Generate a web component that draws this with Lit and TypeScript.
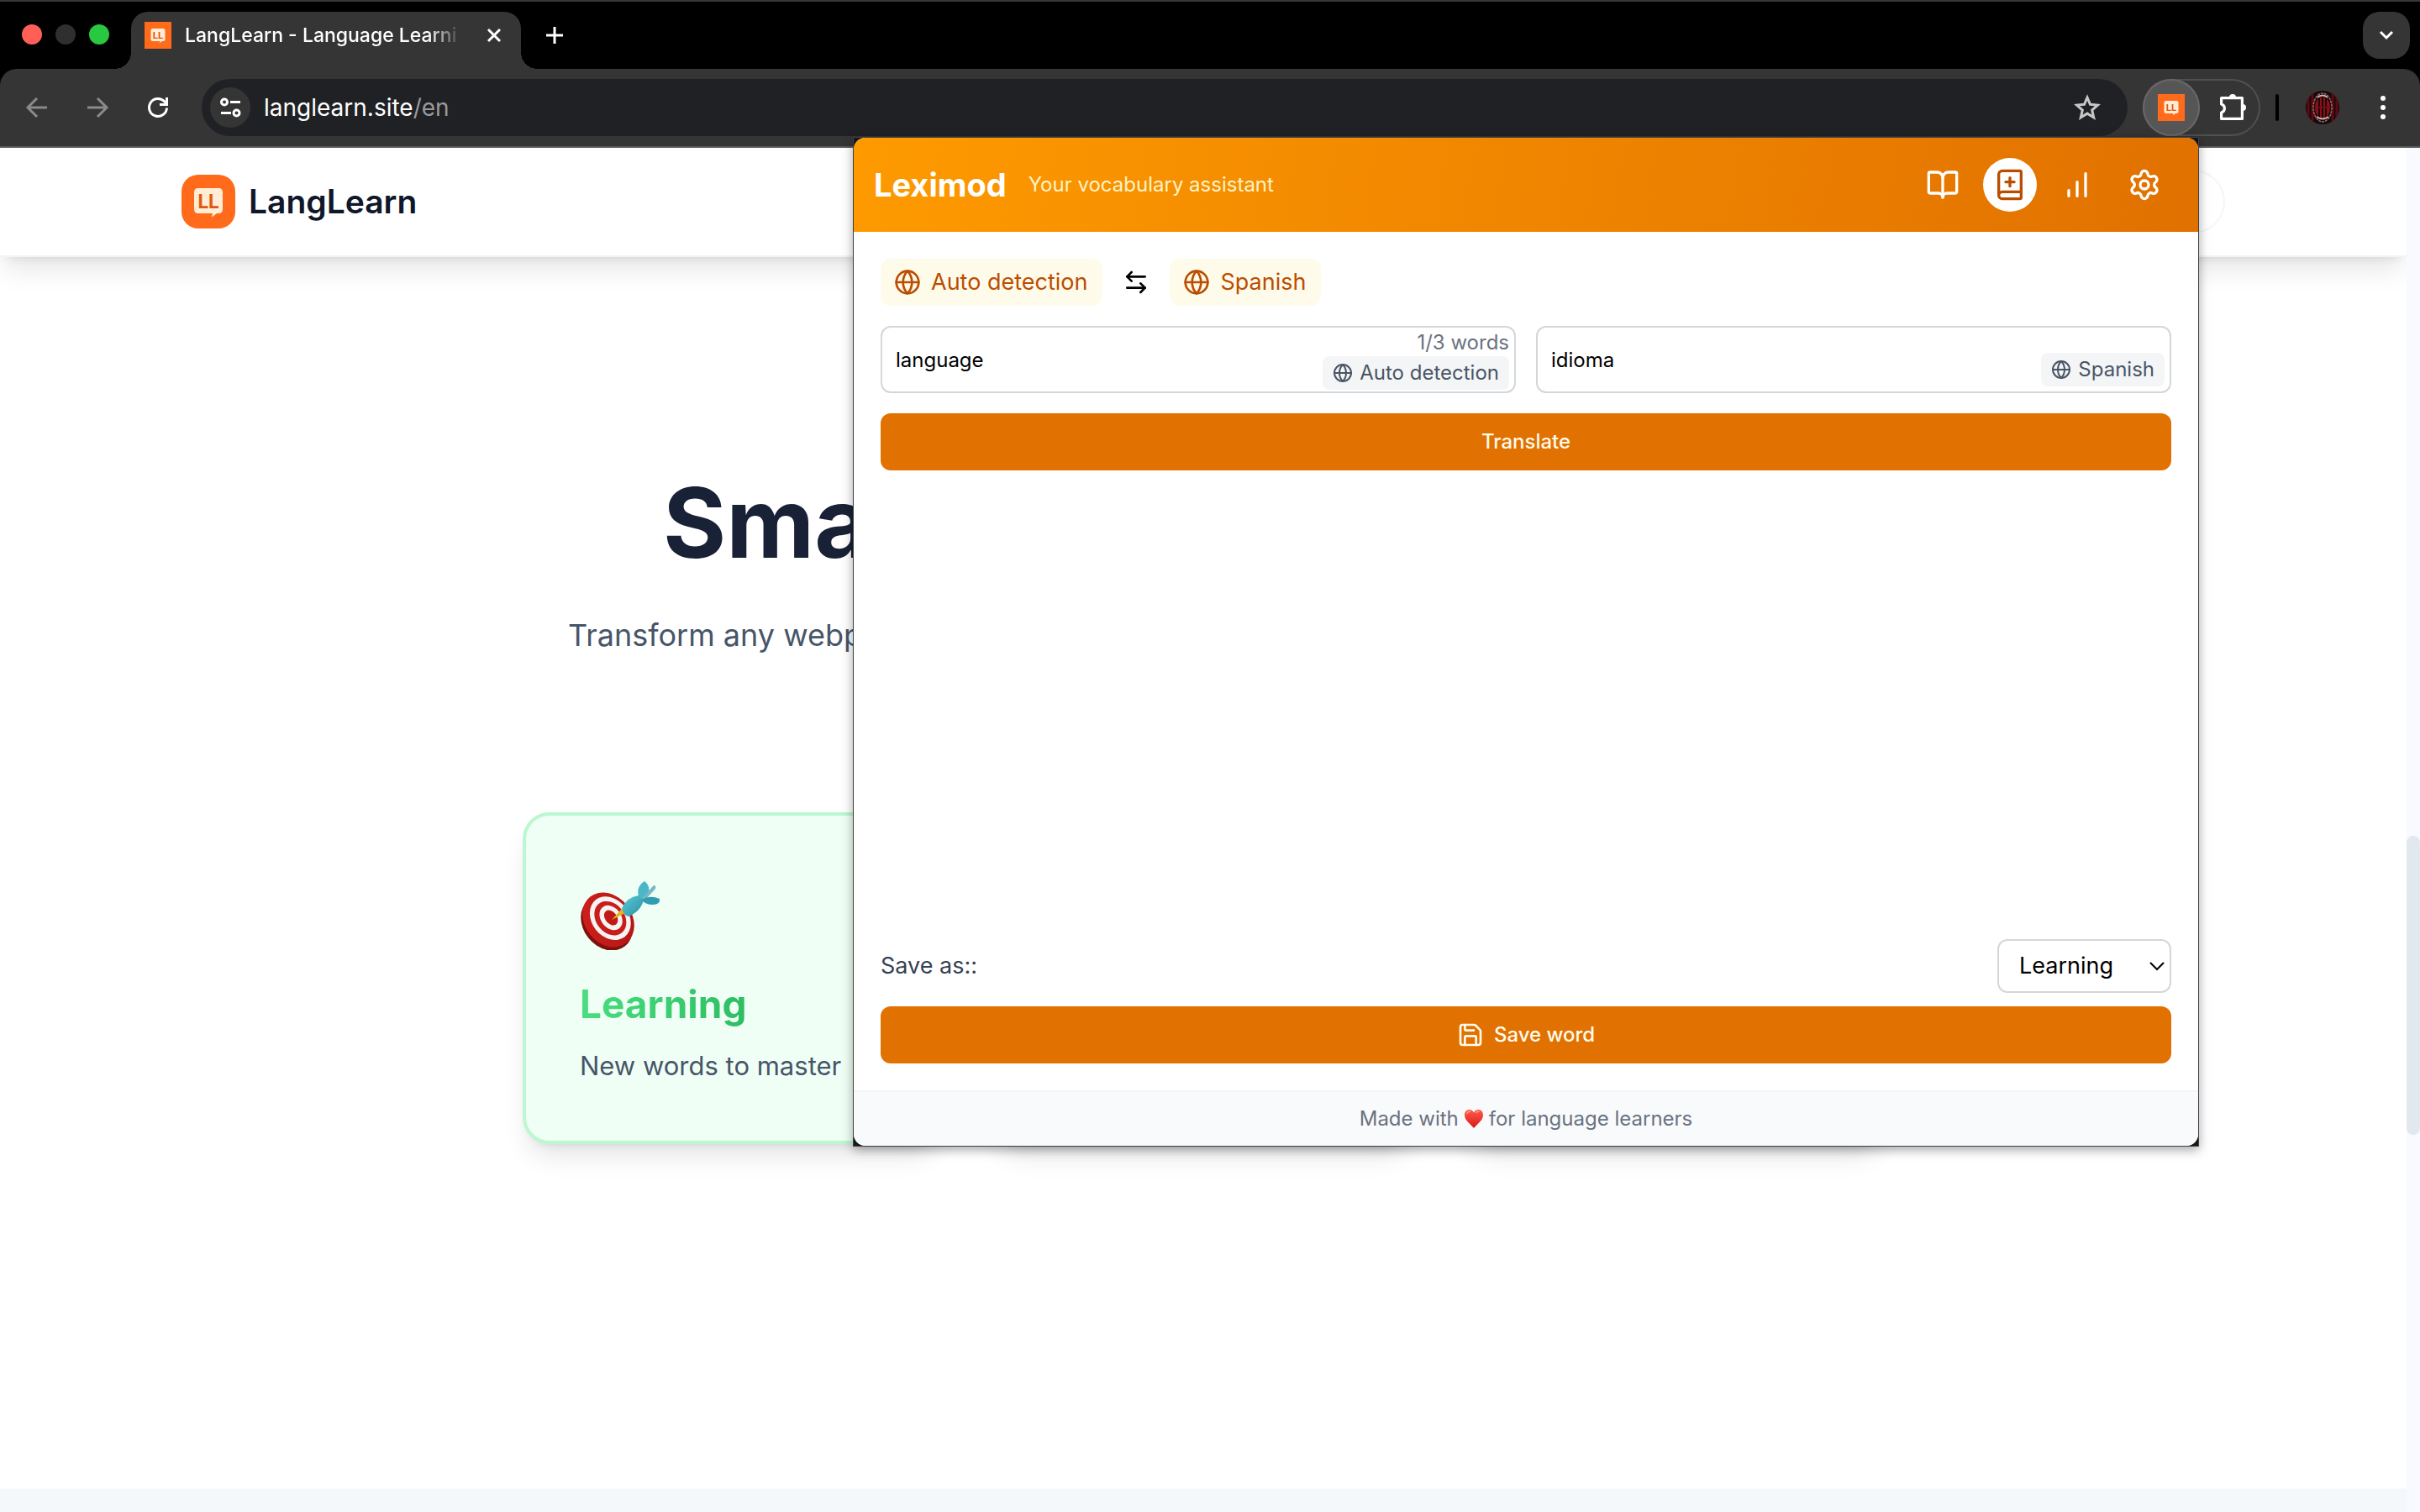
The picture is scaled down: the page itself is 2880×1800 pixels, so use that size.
import { LitElement, html, svg, css } from "lit";
import { customElement, property } from "lit/decorators.js";

const lucide = {
  globe: svg`<circle cx="12" cy="12" r="10"/><path d="M12 2a14.5 14.5 0 0 0 0 20 14.5 14.5 0 0 0 0-20"/><path d="M2 12h20"/>`,
  swap: svg`<path d="M8 3 4 7l4 4"/><path d="M4 7h16"/><path d="m16 21 4-4-4-4"/><path d="M20 17H4"/>`,
  book: svg`<path d="M12 7v14"/><path d="M3 18a1 1 0 0 1-1-1V4a1 1 0 0 1 1-1h5a4 4 0 0 1 4 4 4 4 0 0 1 4-4h5a1 1 0 0 1 1 1v13a1 1 0 0 1-1 1h-6a3 3 0 0 0-3 3 3 3 0 0 0-3-3z"/>`,
  bookPlus: svg`<path d="M12 7v6"/><path d="M4 19.5v-15A2.5 2.5 0 0 1 6.500 2H19a1 1 0 0 1 1 1v18a1 1 0 0 1-1 1H6.500a1 1 0 0 1 0-5H20"/><path d="M9 10h6"/>`,
  chart: svg`<path d="M12 20V10"/><path d="M18 20V4"/><path d="M6 20v-4"/>`,
  settings: svg`<path d="M9.671 4.136a2.34 2.34 0 0 1 4.659 0 2.34 2.34 0 0 0 3.319 1.915 2.34 2.34 0 0 1 2.33 4.033 2.34 2.34 0 0 0 0 3.831 2.34 2.34 0 0 1-2.33 4.033 2.34 2.34 0 0 0-3.319 1.915 2.34 2.34 0 0 1-4.659 0 2.34 2.34 0 0 0-3.32-1.915 2.34 2.34 0 0 1-2.33-4.033 2.34 2.34 0 0 0 0-3.831A2.34 2.34 0 0 1 6.35 6.051a2.34 2.34 0 0 0 3.319-1.915"/><circle cx="12" cy="12" r="3"/>`,
  save: svg`<path d="M15.200 3a2 2 0 0 1 1.400.600l3.800 3.800a2 2 0 0 1 .600 1.400V19a2 2 0 0 1-2 2H5a2 2 0 0 1-2-2V5a2 2 0 0 1 2-2z"/><path d="M17 21v-7a1 1 0 0 0-1-1H8a1 1 0 0 0-1 1v7"/><path d="M7 3v4a1 1 0 0 0 1 1h7"/>`,
};

type IconName = keyof typeof lucide;

const icon = (name: IconName, size: number) => html`
  <svg class="icon" width=${size} height=${size} viewBox="0 0 24 24" fill="none" stroke="currentColor"
    stroke-width="2" stroke-linecap="round" stroke-linejoin="round" aria-hidden="true">${lucide[name]}</svg>`;

const base = css`
  *, *::before, *::after { box-sizing: border-box; }
  button, input, select { font: inherit; color: inherit; margin: 0; padding: 0; border: 0; background: none; }
  svg { display: block; flex: none; }
  a { color: inherit; text-decoration: none; }
  h1, h2, p { margin: 0; font-weight: inherit; font-size: inherit; }
`;

@customElement("lang-logo")
export class LangLogo extends LitElement {
  @property({ type: Number }) size = 64;
  @property({ type: Number }) radius = 20;

  static styles = css`
    :host { display: block; flex: none; }
    svg { display: block; }
    text { font-family: "Liberation Sans Narrow", Roboto, "Liberation Sans", sans-serif; font-weight: 700; }
  `;

  render() {
    return html`
      <svg width=${this.size} height=${this.size} viewBox="0 0 64 64" aria-hidden="true">
        <rect width="64" height="64" rx=${this.radius} fill="#ff6b1a" />
        <path d="M20 16h24q5 0 5 5v20q0 5-5 5h-2l-6 4.500 1-4.500H20q-5 0-5-5V21q0-5 5-5z" fill="#ffedd5" />
        <text x="32" y="40" text-anchor="middle" font-size="23" fill="#e2560f">LL</text>
      </svg>`;
  }
}

@customElement("browser-bar")
export class BrowserBar extends LitElement {
  static styles = [base, css`
    :host { display: block; background: #000; color: #fff; border-top: 2px solid #383838; }
    .tabs { display: flex; height: 80px; padding: 12px 12px 0 26px; }
    .lights { display: flex; gap: 16px; margin-top: 15px; }
    .light { width: 24px; height: 24px; border-radius: 50%; }
    .red { background: #ff5f57; }
    .dim { background: #2f2f2f; }
    .green { background: #28c840; }
    .tab {
      position: relative; display: flex; align-items: center; width: 464px; height: 68px; margin-left: 26px;
      padding: 0 20px 12px 16px; border-radius: 20px 20px 0 0; background: #353535;
    }
    .tab::before, .tab::after {
      content: ""; position: absolute; bottom: 0; width: 20px; height: 20px;
    }
    .tab::before { right: 100%; background: radial-gradient(circle at 0 0, transparent 20px, #353535 20px); }
    .tab::after { left: 100%; background: radial-gradient(circle at 100% 0, transparent 20px, #353535 20px); }
    .title {
      flex: 1; min-width: 0; margin-left: 16px; overflow: hidden; white-space: nowrap; font-size: 23px; line-height: 32px; font-weight: 500;
      mask-image: linear-gradient(90deg, #000 86%, transparent 98%);
    }
    .close { margin-left: 20px; }
    .plus { display: flex; align-items: center; height: 56px; margin-left: 30px; }
    .search { display: grid; place-items: center; width: 56px; height: 56px; margin-left: auto; border-radius: 20px; background: #353535; }
    .bar {
      display: flex; align-items: center; height: 94px; padding: 0 24px 0 28px;
      background: #353535; border-radius: 20px 20px 0 0; border-bottom: 2px solid #5a5a5a;
    }
    .nav { display: flex; gap: 40px; }
    .nav button { color: #8a8a8a; }
    .nav .on { color: #fff; }
    .omni {
      flex: 1; display: flex; align-items: center; height: 68px; margin-left: 36px; padding: 0 32px 0 10px;
      border-radius: 34px; background: #202124;
    }
    .info { display: grid; place-items: center; width: 48px; height: 48px; border-radius: 50%; background: #353535; }
    .url { flex: 1; margin-left: 16px; font-size: 28px; line-height: 36px; color: #9a9a9a; }
    .url b { font-weight: 400; color: #fff; }
    .ext { display: flex; align-items: center; height: 68px; width: 140px; margin-left: 18px; border-radius: 34px; box-shadow: inset 0 0 0 2px #505050; }
    .ext-on { display: grid; place-items: center; width: 68px; height: 68px; border-radius: 50%; background: #565656; box-shadow: inset 0 0 0 2px #686868; }
    .puzzle { margin-left: 22px; }
    .sep { width: 4px; height: 32px; margin-left: 18px; border-radius: 2px; background: #000; }
    .avatar { margin-left: 32px; }
    .menu { margin-left: 40px; }
  `];

  render() {
    return html`
      <div class="tabs">
        <div class="lights"><span class="light red"></span><span class="light dim"></span><span class="light green"></span></div>
        <div class="tab">
          <lang-logo size="32" radius="0"></lang-logo>
          <span class="title">LangLearn - Language Learni</span>
          <button class="close" aria-label="Close tab">
            <svg width="24" height="24" viewBox="0 0 24 24" stroke="#fff" stroke-width="3" fill="none"><path d="M5 5l14 14M19 5L5 19"/></svg>
          </button>
        </div>
        <button class="plus" aria-label="New tab">
          <svg width="20" height="20" viewBox="0 0 20 20" stroke="#fff" stroke-width="3" fill="none"><path d="M10 0v20M0 10h20"/></svg>
        </button>
        <button class="search" aria-label="Search tabs">
          <svg width="20" height="20" viewBox="0 0 20 20" stroke="#fff" stroke-width="3" fill="none"><path d="M3 6l7 7 7-7"/></svg>
        </button>
      </div>
      <div class="bar">
        <div class="nav">
          <button aria-label="Back"><svg width="32" height="32" viewBox="0 0 32 32" fill="none" stroke="currentColor" stroke-width="3"><path d="M28 16H6M16 5L5 16l11 11"/></svg></button>
          <button aria-label="Forward"><svg width="32" height="32" viewBox="0 0 32 32" fill="none" stroke="currentColor" stroke-width="3"><path d="M4 16h22M16 5l11 11-11 11"/></svg></button>
          <button class="on" aria-label="Reload"><svg width="32" height="32" viewBox="0 0 32 32" fill="none" stroke="currentColor" stroke-width="3"><path d="M26.500 16.500A10.500 10.500 0 1 1 23.500 8.600L26 11"/><path d="M26.500 4v8.500H18"/></svg></button>
        </div>
        <div class="omni">
          <button class="info" aria-label="Site information">
            <svg width="28" height="28" viewBox="0 0 28 28" fill="none" stroke="#fff" stroke-width="3"><circle cx="7" cy="7.500" r="3.500"/><path d="M14 7.500h12M3 20.500h12"/><circle cx="21.500" cy="20.500" r="3.500"/></svg>
          </button>
          <div class="url"><b>langlearn.site</b>/en</div>
          <button aria-label="Bookmark">
            <svg width="32" height="32" viewBox="0 0 32 32" fill="none" stroke="#c7c7c7" stroke-width="3"><path d="M16 4l3.500 8.300 9 .800-6.800 5.900 2 8.800L16 23.100l-7.700 4.700 2-8.800-6.800-5.900 9-.800z"/></svg>
          </button>
        </div>
        <div class="ext">
          <button class="ext-on" aria-label="Leximod"><lang-logo size="32" radius="0"></lang-logo></button>
          <button class="puzzle" aria-label="Extensions">
            <svg width="36" height="36" viewBox="0 0 36 36" fill="none" stroke="#fff" stroke-width="3.200" stroke-linejoin="round">
              <path d="M3.600 6.600H28.400V31.400H3.600v-7.400a5.200 5.200 0 0 0 0-10z"/>
              <path d="M13 6a4 4 0 0 1 8 0zM29 14a4 4 0 0 1 0 8z" fill="#fff" stroke="none"/>
            </svg>
          </button>
        </div>
        <span class="sep"></span>
        <button class="avatar" aria-label="Profile">
          <svg width="40" height="40" viewBox="0 0 40 40">
            <clipPath id="round"><circle cx="20" cy="20" r="20"/></clipPath>
            <g clip-path="url(#round)">
              <rect width="40" height="40" fill="#1c0608"/>
              <path d="M3 0v40M8 0v40M32 0v40M37 0v40" stroke="#5d0a12" stroke-width="3"/>
              <ellipse cx="20" cy="20" rx="11" ry="17" fill="#240709" stroke="#8a7373" stroke-width="1.500" stroke-dasharray="3 1"/>
              <ellipse cx="20" cy="20" rx="9" ry="13" fill="#8c1018"/>
              <path d="M16 8v24M20 7v26M24 8v24" stroke="#1a0406" stroke-width="2"/>
              <path d="M12 20h16" stroke="#6b1118" stroke-width="2"/>
              <path d="M13 31q7 5 14 0M14 8q6-5 12 0" stroke="#c9bcbc" stroke-width="2" fill="none"/>
            </g>
          </svg>
        </button>
        <button class="menu" aria-label="Menu">
          <svg width="32" height="32" viewBox="0 0 32 32" fill="#fff"><circle cx="12" cy="5" r="3"/><circle cx="12" cy="16" r="3"/><circle cx="12" cy="27" r="3"/></svg>
        </button>
      </div>`;
  }
}

@customElement("landing-page")
export class LandingPage extends LitElement {
  static styles = [base, css`
    :host { display: flex; min-height: 0; background: #fff; }
    .page { flex: 1; min-width: 0; display: flex; flex-direction: column; overflow: hidden; }
    .head {
      display: flex; align-items: center; justify-content: space-between; height: 130px; padding: 0 216px;
      background: #fff; border-bottom: 2px solid #f4f4f5;
      box-shadow: 0 20px 30px -6px rgba(0, 0, 0, .1), 0 8px 12px -8px rgba(0, 0, 0, .1);
    }
    .brand { display: flex; align-items: center; gap: 16px; font-size: 39px; line-height: 48px; font-weight: 600; color: #0f172a; }
    .lang { width: 140px; height: 76px; border: 2px solid #f3f5f8; border-radius: 38px; background: #fff; }
    .hero { flex: 1; padding: 244px 622px 0; }
    h1 {
      max-width: 1286px; margin: 0 auto; font-size: 115px; line-height: 146px; font-weight: 700;
      color: #182135; white-space: nowrap;
    }
    .lead { max-width: 1512px; margin: 28px auto 0; font-size: 36px; line-height: 64px; color: #475569; white-space: nowrap; }
    .cards { display: grid; grid-template-columns: repeat(3, 1fr); gap: 64px; margin-top: 179px; }
    .card {
      min-height: 395px; padding: 64px; border: 4px solid #bbf7d0; border-radius: 32px; background: #effff5;
      box-shadow: 0 20px 30px -6px rgba(0, 0, 0, .1), 0 8px 12px -8px rgba(0, 0, 0, .1);
    }
    .card h2 {
      margin-top: 32px; font-size: 46px; line-height: 64px; font-weight: 700; color: transparent;
      background: linear-gradient(90deg, #4ade80, #16a34a); background-clip: text; -webkit-background-clip: text;
    }
    .card p { margin-top: 18px; font-size: 31px; line-height: 48px; color: #475569; white-space: nowrap; }
    .next { height: 28px; background: #f5f8fb; }
    .track { width: 16px; background: #f8faff; display: flex; flex-direction: column; }
    .thumb { height: 356px; margin-top: 819px; border-radius: 8px; background: #e2e8f0; }
  `];

  render() {
    return html`
      <div class="page">
        <header class="head">
          <a class="brand" href="#"><lang-logo></lang-logo>LangLearn</a>
          <button class="lang" aria-label="Account"></button>
        </header>
        <main class="hero">
          <h1>Smart</h1>
          <p class="lead">Transform any webpage</p>
          <div class="cards">
            <article class="card">
              <svg width="96" height="96" viewBox="0 0 96 96" aria-hidden="true">
                <defs>
                  <linearGradient id="rim" x1="0" y1="0" x2="1" y2="1"><stop offset="0" stop-color="#d3201c"/><stop offset="1" stop-color="#b01615"/></linearGradient>
                  <linearGradient id="wing" x1="0" y1="0" x2="1" y2="1"><stop offset="0" stop-color="#5fcbd8"/><stop offset="1" stop-color="#2790a5"/></linearGradient>
                </defs>
                <g transform="rotate(-38 33 62)">
                  <ellipse cx="31" cy="63" rx="28" ry="35" fill="#7e100f"/>
                  <ellipse cx="35" cy="61" rx="28" ry="35" fill="url(#rim)"/>
                  <ellipse cx="38" cy="61" rx="22" ry="28" fill="#f6f3f3"/>
                  <ellipse cx="38" cy="61" rx="17" ry="22" fill="#c81d1b"/>
                  <ellipse cx="39" cy="61" rx="12" ry="16" fill="#f6f3f3"/>
                  <ellipse cx="39" cy="61" rx="7" ry="10" fill="#c01a18"/>
                </g>
                <path d="M38 60l12-13 4 5z" fill="#e8b21c"/>
                <path d="M50 46q6-13 20-15l6 5q-3 14-18 20-6-1-8-10z" fill="url(#wing)"/>
                <path d="M70 32q-3-12 7-18 8 6 4 16l-7 6z" fill="#49b7c8"/>
                <path d="M74 34l14-15q3 0 2 4L79 35z" fill="#79b6c4"/>
                <path d="M73 36q10-6 22-1 1 7-8 7-9 0-14-6z" fill="#2f9db2"/>
              </svg>
              <h2>Learning</h2>
              <p>New words to master</p>
            </article>
            <article class="card"></article>
            <article class="card"></article>
          </div>
        </main>
        <div class="next"></div>
      </div>
      <div class="track"><div class="thumb"></div></div>`;
  }
}

@customElement("leximod-popup")
export class LeximodPopup extends LitElement {
  static styles = [base, css`
    :host { display: block; border: 1px solid #3f4042; background: #161718; box-shadow: 0 4px 12px rgba(0, 0, 0, .35); color: #000; }
    .panel { display: flex; flex-direction: column; min-height: 1200px; border-radius: 14px; overflow: hidden; background: #fff; }
    .top {
      display: flex; align-items: center; height: 112px; padding: 0 32px 0 24px;
      background: linear-gradient(100deg, #fe9a00, #e17100); color: #fff;
    }
    h1 { font-size: 38px; line-height: 48px; font-weight: 700; }
    .sub { margin-left: 26px; font-size: 24px; line-height: 32px; color: #fef3c6; }
    .tools { display: flex; gap: 16px; margin-left: auto; }
    .tool { display: grid; place-items: center; width: 64px; height: 64px; border-radius: 50%; }
    .active { background: #fff; color: #bb4d00; }
    .body { flex: 1; display: flex; flex-direction: column; padding: 32px; }
    .langs { display: flex; align-items: center; gap: 24px; }
    .pill {
      display: flex; align-items: center; gap: 12px; height: 56px; padding: 0 18px 0 16px; border-radius: 12px;
      background: #fffbeb; color: #bb4d00; font-size: 27px; line-height: 40px;
    }
    .fields { display: grid; grid-template-columns: 1fr 1fr; gap: 24px; margin-top: 24px; }
    .field { position: relative; }
    .field input {
      display: block; width: 100%; height: 80px; padding: 0 16px; border: 2px solid #d4d6d8; border-radius: 12px;
      background: #fff; font-size: 24px; outline: 0;
    }
    .over { position: absolute; right: 8px; bottom: 8px; display: flex; flex-direction: column; align-items: flex-end; font-size: 24px; line-height: 32px; color: #6a7282; }
    .over.tall { bottom: 4px; }
    .badge { display: flex; align-items: center; gap: 8px; height: 40px; padding: 0 12px; border-radius: 8px; background: #f3f5f7; color: #4a5565; }
    .main {
      display: flex; align-items: center; justify-content: center; gap: 12px; height: 68px; border-radius: 12px;
      background: #e17100; color: #fffbeb; font-size: 24px; line-height: 32px; font-weight: 500;
    }
    .translate { margin-top: 24px; }
    .save { display: flex; align-items: center; justify-content: space-between; margin: auto 0 16px; font-size: 27px; line-height: 40px; color: #364153; }
    .pick { position: relative; }
    .pick svg { position: absolute; right: 7px; top: 22px; pointer-events: none; }
    .pick select {
      display: block; appearance: none; width: 207px; height: 64px; padding: 0 24px; border: 2px solid #d4d6d8;
      border-radius: 12px; background: #fff; color: #000;
    }
    .foot {
      display: flex; align-items: center; justify-content: center; gap: 6px; height: 66px; border-top: 2px solid #f3f4f6;
      background: #f9fafb; color: #6a7282; font-size: 24px; line-height: 32px;
    }
  `];

  render() {
    return html`
      <div class="panel">
        <header class="top">
          <h1>Leximod</h1>
          <p class="sub">Your vocabulary assistant</p>
          <nav class="tools">
            <button class="tool" aria-label="Dictionary">${icon("book", 40)}</button>
            <button class="tool active" aria-label="Add word">${icon("bookPlus", 40)}</button>
            <button class="tool" aria-label="Statistics">${icon("chart", 40)}</button>
            <button class="tool" aria-label="Settings">${icon("settings", 40)}</button>
          </nav>
        </header>
        <div class="body">
          <div class="langs">
            <button class="pill">${icon("globe", 32)}Auto detection</button>
            <button aria-label="Swap languages">${icon("swap", 32)}</button>
            <button class="pill">${icon("globe", 32)}Spanish</button>
          </div>
          <div class="fields">
            <div class="field">
              <input type="text" aria-label="Word" .value=${"language"} />
              <div class="over tall">
                <span>1/3 words</span>
                <span class="badge">${icon("globe", 24)}Auto detection</span>
              </div>
            </div>
            <div class="field">
              <input type="text" aria-label="Translation" .value=${"idioma"} />
              <div class="over"><span class="badge">${icon("globe", 24)}Spanish</span></div>
            </div>
          </div>
          <button class="main translate">Translate</button>
          <div class="save">
            <label for="status">Save as::</label>
            <div class="pick">
              <select id="status"><option>Learning</option></select>
              <svg width="20" height="20" viewBox="0 0 20 20" fill="none" stroke="#000" stroke-width="2"><path d="M2 6l8 8 8-8"/></svg>
            </div>
          </div>
          <button class="main">${icon("save", 32)}Save word</button>
        </div>
        <footer class="foot">
          <span>Made with</span>
          <svg width="24" height="24" viewBox="0 0 24 24" role="img" aria-label="love">
            <defs><linearGradient id="heart" x1="0" y1="0" x2="0" y2="1"><stop offset="0" stop-color="#ff5b4d"/><stop offset="1" stop-color="#d81a14"/></linearGradient></defs>
            <path d="M12 23C8 18 1 14 1 7.500 1 3.500 3.500 1 6.700 1 9 1 11 2.300 12 4.500 13 2.300 15 1 17.300 1 20.500 1 23 3.500 23 7.500 23 14 16 18 12 23z" fill="url(#heart)"/>
            <path d="M4 5.500Q5 3 7.500 3M15 4.500Q16 3 18 3" stroke="#ff9c90" stroke-width="1.500" fill="none" stroke-linecap="round"/>
          </svg>
          <span>for language learners</span>
        </footer>
      </div>`;
  }
}

@customElement("app-root")
export class AppRoot extends LitElement {
  static styles = css`
    :host {
      position: relative; display: flex; flex-direction: column; height: 100vh; overflow: hidden;
      font-family: Inter, Roboto, "Liberation Sans", sans-serif; background: #fff;
    }
    browser-bar { flex: none; }
    landing-page { flex: 1; }
    leximod-popup { position: absolute; top: 163px; right: 263px; width: 1602px; max-width: 100%; box-sizing: border-box; }
  `;

  render() {
    return html`
      <browser-bar></browser-bar>
      <landing-page></landing-page>
      <leximod-popup></leximod-popup>`;
  }
}
